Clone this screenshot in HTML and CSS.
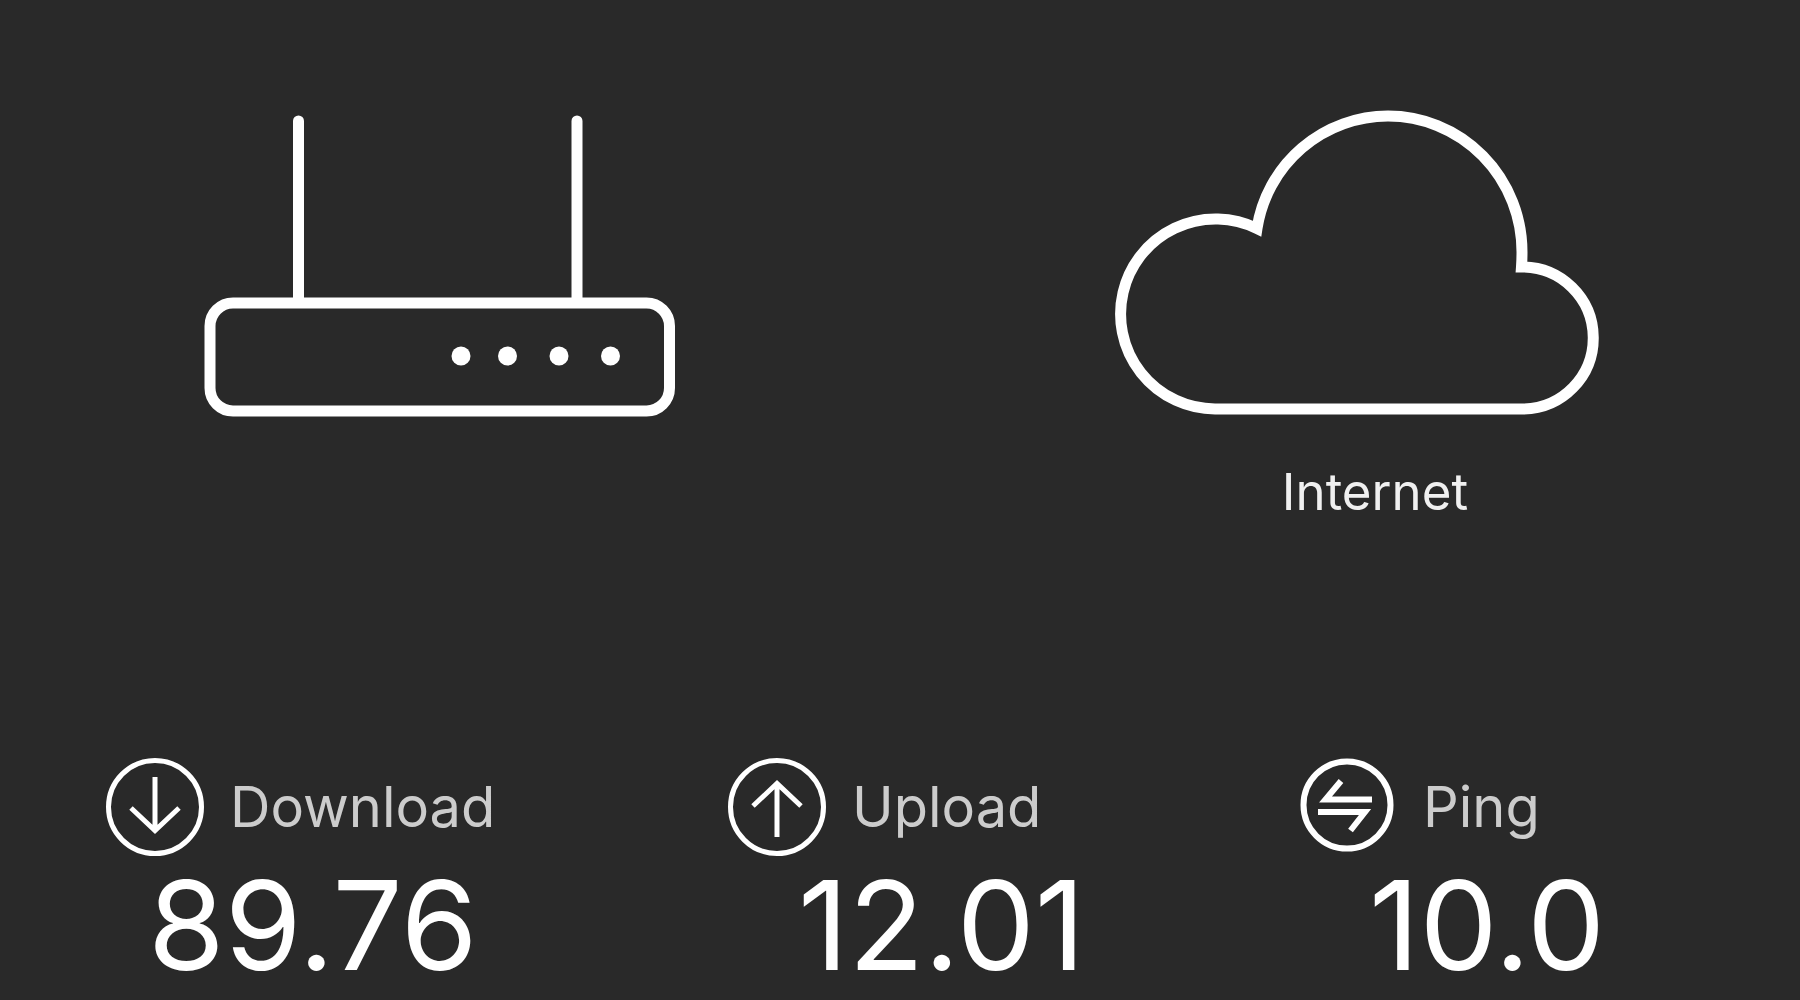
FILE: index.html
```
<!DOCTYPE html>
<html lang="en">
<head>
  <meta charset="UTF-8">
  <meta name="viewport" content="width=device-width, initial-scale=1.0">
  <title>Speed Test</title>
  <link rel="stylesheet" href="styles.css">
</head>
<body>

  <main>
    <section class="devices">
      <figure class="device">
        <svg class="router" viewBox="0 0 472 302" role="img" aria-label="Router">
          <path d="M94.5 6V186M373 6V186" />
          <rect x="6" y="188" width="459.5" height="108" rx="23" />
          <g class="lights">
            <circle cx="257" cy="241" r="9.5" />
            <circle cx="303.5" cy="241" r="9.5" />
            <circle cx="355" cy="241" r="9.5" />
            <circle cx="406.5" cy="241" r="9.5" />
          </g>
        </svg>
      </figure>

      <figure class="device">
        <svg class="cloud" viewBox="0 0 486 305" aria-hidden="true">
          <path d="M143 118.5A95 95 0 1 0 101 299H409A71 71 0 0 0 407.5 157Q408 150 408 142A134 136 0 0 0 274 6A133 133 0 0 0 143 118.5Z" />
        </svg>
        <figcaption>Internet</figcaption>
      </figure>
    </section>

    <dl class="results">
      <div class="result download">
        <dt>
          <svg class="icon" viewBox="0 0 98 98" aria-hidden="true">
            <circle cx="49" cy="49" r="46.5" />
            <path d="M49 19V73M25 50L49 72.5L73 50" />
          </svg>
          Download
        </dt>
        <dd>89.76</dd>
      </div>

      <div class="result">
        <dt>
          <svg class="icon" viewBox="0 0 98 98" aria-hidden="true">
            <circle cx="49" cy="49" r="46.5" />
            <path d="M49 79V25M25 48L49 25.5L73 48" />
          </svg>
          Upload
        </dt>
        <dd>12.01</dd>
      </div>

      <div class="result">
        <dt>
          <svg class="icon ping" viewBox="0 0 98 98" aria-hidden="true">
            <circle cx="48" cy="47" r="43.5" />
            <path d="M73 41.5H26.5L42 23M19 54H66L51.5 72.5" />
          </svg>
          Ping
        </dt>
        <dd>10.0</dd>
      </div>
    </dl>
  </main>

</body>
</html>
```
FILE: styles.css
```
body {
  margin: 0;
  background-color: #292929;
  color: white;
  font-family: Inter, "Liberation Sans", sans-serif;
}

svg {
  display: block;
  fill: none;
  stroke: white;
}

.devices {
  display: flex;
  justify-content: space-between;
  align-items: flex-start;
  padding: 110px 200px 0 204px;
}

.device {
  margin: 0;
}

.router {
  width: 472px;
  margin-top: 5px;
  stroke-width: 11px;
  stroke-linecap: round;
}

.lights {
  fill: white;
  stroke: none;
}

.cloud {
  width: 486px;
  stroke-width: 11px;
}

figcaption {
  margin-top: 47px;
  padding-left: 36px;
  font-size: 51px;
  line-height: 60px;
  text-align: center;
  color: #f0f0f0;
}

.results {
  display: grid;
  grid-template-columns: 622fr 571fr 501fr;
  margin: 236px 0 0;
  padding-left: 106px;
}

dt {
  display: flex;
  align-items: center;
  gap: 26px;
  font-size: 56px;
  line-height: 98px;
  color: #cccccc;
}

.icon {
  width: 98px;
  height: 98px;
  stroke-width: 5px;
}

.ping {
  stroke-width: 6px;
}

dd {
  margin: 0;
  padding-left: 70px;
  font-size: 124px;
  line-height: 138px;
}

.download dd {
  padding-left: 42px;
}
```
